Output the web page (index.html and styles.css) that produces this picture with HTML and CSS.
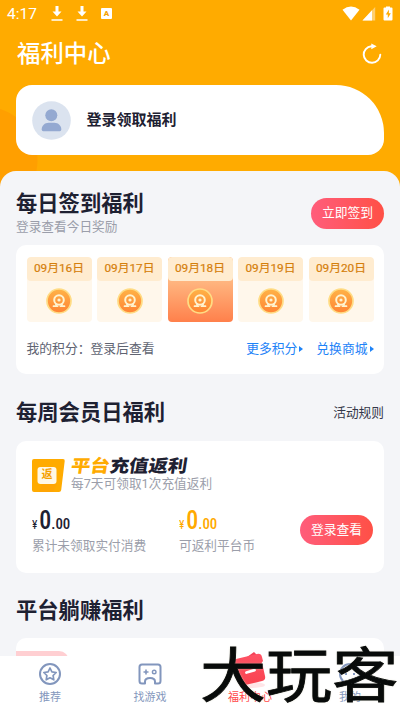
FILE: index.html
```html
<!DOCTYPE html>
<html lang="zh-CN">
<head>
<meta charset="utf-8">
<title>福利中心</title>
<link rel="stylesheet" href="styles.css">
</head>
<body>
<svg class="defs" width="0" height="0" aria-hidden="true">
  <defs>
    <linearGradient id="coinFill" x1="0" y1="0" x2="0" y2="1"><stop offset="0" stop-color="#ffb347"/><stop offset="1" stop-color="#ff8434"/></linearGradient>
    <linearGradient id="bagFill" x1="0" y1="0" x2="0" y2="1"><stop offset="0" stop-color="#ff5365"/><stop offset="1" stop-color="#f94350"/></linearGradient>
    <symbol id="coin" viewBox="0 0 26 26">
      <circle cx="13" cy="13" r="12" fill="url(#coinFill)" stroke="#ffdc85" stroke-width="1.7"/>
      <circle cx="13" cy="12" r="4.8" fill="none" stroke="#fff3cf" stroke-width="2"/>
      <circle cx="13" cy="12" r="1.6" fill="#fff3cf"/>
      <path d="M7.500 18.200h3.600l-1.200-2M18.500 18.200h-3.600l1.200-2" fill="none" stroke="#fff3cf" stroke-width="1.700" stroke-linecap="round"/>
    </symbol>
  </defs>
</svg>
<div class="screen">
  <header class="hero">
    <div class="status">
      <span class="clock">4:17</span>
      <svg class="dl" width="12" height="16" viewBox="0 0 12 16"><path d="M4.500 0h3v5.500h3L6 10.500 1.500 5.500h3zM.5 13.200h11v1.500H.5z" fill="#fff"/></svg>
      <svg class="dl second" width="12" height="16" viewBox="0 0 12 16"><path d="M4.500 0h3v5.500h3L6 10.500 1.500 5.500h3zM.5 13.200h11v1.500H.5z" fill="#fff"/></svg>
      <span class="abox">A</span>
      <svg class="signals" width="52" height="16" viewBox="0 0 52 16">
        <path d="M.5 3.800Q9 -2.800 17.500 3.800L9 14.500z" fill="#fff"/>
        <path d="M33.200 1v13.500H20.500z" fill="#ffcf70"/><path d="M30 4.300v10.200h-9.500z" fill="#fff"/>
        <path d="M44 1.500V.5h4v1h1.500q1 0 1 1v11q0 1-1 1h-7q-1 0-1-1v-11q0-1 1-1z" fill="#fff"/><path d="M47 3.500l-3.200 5h2v3.700l3-5h-2z" fill="#ffab00"/>
      </svg>
    </div>
    <div class="titlebar">
      <h1>福利中心</h1>
      <svg width="22" height="22" viewBox="0 0 22 22"><path d="M10.300 3.200A8.300 8.300 0 1 0 19.300 11.700" fill="none" stroke="#fff" stroke-width="1.900" stroke-linecap="round"/><path d="M10.300.4v5.800l5.400-2.900z" fill="#fff"/></svg>
    </div>
    <div class="login">
      <svg width="39" height="39" viewBox="0 0 39 39"><circle cx="19.500" cy="19.500" r="19.300" fill="#dbe3ef"/><circle cx="19.300" cy="14.200" r="6" fill="#94a9d1"/><path d="M9.700 28.500c0-4 3-6.800 7-6.800h5.600c4 0 7 2.800 7 6.800q0 1.700-1.600 1.700H11.300q-1.600 0-1.600-1.700z" fill="#94a9d1"/></svg>
      <span>登录领取福利</span>
    </div>
  </header>
  <main class="sheet">
    <div class="head daily">
      <div><h2>每日签到福利</h2><p class="muted">登录查看今日奖励</p></div>
      <span class="pill">立即签到</span>
    </div>
    <section class="card checkin">
      <div class="days">
        <div class="day"><span>09月16日</span><svg><use href="#coin"/></svg></div>
        <div class="day"><span>09月17日</span><svg><use href="#coin"/></svg></div>
        <div class="day today"><span>09月18日</span><svg><use href="#coin"/></svg></div>
        <div class="day"><span>09月19日</span><svg><use href="#coin"/></svg></div>
        <div class="day"><span>09月20日</span><svg><use href="#coin"/></svg></div>
      </div>
      <div class="points"><span class="mine">我的积分：登录后查看</span><a>更多积分</a><a>兑换商城</a></div>
    </section>
    <div class="head weekly"><h2>每周会员日福利</h2><span class="rules">活动规则</span></div>
    <section class="card rebate">
      <div class="promo">
        <div class="badge"><svg width="33" height="33" viewBox="0 0 33 33"><path d="M2 0h29q2 0 1.700 2l-3.500 29q-.3 2-2.200 2H2q-2 0-2-2V2q0-2 2-2z" fill="#ffab00"/><path d="M10 25h15l-4 8H7z" fill="#ff9f08" opacity=".5"/><rect x="5.500" y="8" width="19" height="17" rx="3" fill="#fff8e8"/></svg><b>返</b></div>
        <div><h3><em>平台</em>充值返利</h3><p class="muted">每7天可领取1次充值返利</p></div>
      </div>
      <div class="amounts">
        <div class="amount"><p class="money"><i>¥</i><b>0</b>.00</p><p class="muted">累计未领取实付消费</p></div>
        <div class="amount gold"><p class="money"><i>¥</i><b>0</b>.00</p><p class="muted">可返利平台币</p></div>
        <span class="pill">登录查看</span>
      </div>
    </section>
    <div class="head passive"><h2>平台躺赚福利</h2></div>
    <section class="card last"><div class="ribbon"></div></section>
  </main>
  <nav class="tabs">
    <div class="tab"><svg width="24" height="24" viewBox="0 0 24 24" fill="none" stroke="#8296bd" stroke-linejoin="round"><circle cx="12" cy="12" r="10" stroke-width="2"/><path d="M12 6l1.900 3.900 4.300.6-3.100 3 .7 4.300-3.800-2-3.800 2 .7-4.300-3.100-3 4.300-.6z" stroke-width="1.700"/></svg><span>推荐</span></div>
    <div class="tab"><svg width="24" height="24" viewBox="0 0 24 24" fill="none" stroke="#8296bd" stroke-width="2"><path d="M4 2.500h16q2.500 0 2.500 2.500v14q0 2.500-2.500 2.500h-3v-2q0-3.500-5-3.500t-5 3.500v2H4Q1.500 21.500 1.500 19V5Q1.500 2.500 4 2.500z" stroke-linejoin="round"/><path d="M5.500 10h5M8 7.500v5" stroke-width="1.600"/><circle cx="16.200" cy="10" r="1.800" stroke-width="1.400"/></svg><span>找游戏</span></div>
    <div class="tab active"><svg width="38" height="40" viewBox="0 0 38 40"><ellipse cx="21" cy="35" rx="13" ry="3" fill="#ffe5e7"/><path d="M16 7l7-5 6 6 1 4H15z" fill="#f34258"/><path d="M5 9q-3 1-2 4l1 5q4 1 3 5l2 9q1 4 5 3l17-4q4-1 3-5l-2-9q-3-3 0-6l-1-4q-1-4-5-3z" fill="url(#bagFill)"/><path d="M15.500 22.500l8-2.400" stroke="#fff" stroke-width="2.800" stroke-linecap="round"/></svg><span>福利中心</span></div>
    <div class="tab"><svg width="24" height="24" viewBox="0 0 24 24" fill="none" stroke="#8296bd"><circle cx="12" cy="12" r="10" stroke-width="2"/><path d="M8 11v2m8-2v2" stroke-width="2"/></svg><span>我的</span></div>
  </nav>
  <div class="watermark">大玩客</div>
</div>
</body>
</html>
```
FILE: styles.css
```css
* { box-sizing: border-box; margin: 0; padding: 0; }
body { width: 400px; height: 710px; overflow: hidden; font-family: Roboto, "Noto Sans CJK SC", sans-serif; color: #1e2132; }
.defs { position: absolute; }
.screen { position: relative; height: 710px; overflow: hidden; background: #ffab00; }
h1, h2, h3, p, span, a { white-space: nowrap; }
.hero { height: 190px; padding: 0 16px; background: radial-gradient(circle at -16px 160px, #ff9f00 53px, transparent 54px), #ffab00; }
.status { display: flex; height: 28px; padding-top: 6px; margin: 0 -9px; color: #fff; align-items: flex-start; }
.clock { font-size: 15.500px; line-height: 17px; width: 44px; }
.dl.second { margin-left: 13px; }
.abox { width: 11px; height: 11px; margin: 2px 0 0 13px; border-radius: 1px; background: #fff; color: #f5a000; font: 900 8px/11px Roboto, sans-serif; text-align: center; }
.signals { margin-left: auto; margin-right: -1px; }
.titlebar { display: flex; justify-content: space-between; align-items: center; height: 50px; color: #fff; }
.titlebar h1 { font-size: 23.400px; font-weight: 500; line-height: 34px; padding: 2px 0 0 1px; }
.titlebar svg { margin: 2px 1px 0 0; }
.login { display: flex; align-items: center; height: 70px; margin-top: 7px; padding-left: 15.500px; gap: 16px; border-radius: 16px 48px 16px 16px; background: #fff; font-size: 15px; font-weight: 700; }
.login span { margin-top: -3px; }
.sheet { position: relative; height: 538px; margin-top: -19px; padding: 0 16px; border-radius: 16px 16px 0 0; background: #f4f5f8; }
.head { display: flex; justify-content: space-between; }
h2 { font-size: 21.300px; line-height: 30px; font-weight: 700; }
.muted { font-size: 12.700px; line-height: 18px; color: #9b9eaa; }
.daily { height: 74px; padding-top: 18px; }
.daily .muted { line-height: 15px; }
.pill { width: 73px; height: 30px; border-radius: 16px; background: linear-gradient(90deg, #ff5d7b, #ff5046); color: #fff; font-size: 12.800px; line-height: 29px; text-align: center; }
.daily .pill { margin-top: 9px; height: 31px; }
.card { border-radius: 10px; background: #fff; }
.checkin { height: 129px; padding: 12px 10.500px 0; }
.days { display: grid; grid-template-columns: repeat(5, 65px); justify-content: space-between; }
.day { display: flex; flex-direction: column; align-items: center; height: 65px; border-radius: 4px; background: #fff7eb; overflow: hidden; }
.day span { width: 65px; height: 24px; border-radius: 4px; background: #ffecd0; color: #d57f0c; font-size: 11.800px; line-height: 23px; text-align: center; -webkit-text-stroke: .2px #d57f0c; }
.day svg { width: 26px; height: 26px; margin-top: 7px; }
.today { background: linear-gradient(180deg, #ffc08a 25%, #ff804b); }
.points { display: flex; margin-top: 17px; font-size: 12.800px; line-height: 20px; color: #606472; }
.mine { margin-right: auto; }
.points a { display: flex; align-items: center; margin-left: 13px; color: #1e83f7; }
.points a::after { content: ""; margin-left: 2px; border: 3px solid transparent; border-left: 4px solid #1e83f7; border-right: 0; }
.weekly { height: 66.500px; padding-top: 24px; }
.rules { margin-top: 6px; font-size: 12.700px; line-height: 18px; color: #353849; }
.rebate { height: 132px; padding: 18px 11px 0 16px; }
.promo { display: flex; height: 48px; gap: 6px; }
.badge { position: relative; width: 33px; height: 33px; }
.badge b { position: absolute; left: 5.500px; top: 8px; width: 19px; font-size: 11px; line-height: 16px; text-align: center; color: #f5a000; }
h3 { height: 16px; font-size: 17.300px; font-weight: 900; line-height: 15px; transform: skewX(-9deg) scaleX(1.120); transform-origin: 0 50%; }
h3 em { font-style: normal; color: #ffab00; }
.amounts { display: flex; position: relative; }
.amount { width: 147px; }
.money { height: 30px; font-size: 15.500px; line-height: 28px; font-family: "Roboto Condensed", Roboto, sans-serif; font-weight: 500; transform: scaleX(.960); transform-origin: 0 50%; }
.money i { font-style: normal; font-size: 12px; font-weight: 400; margin-right: 2px; }
.money b { font-size: 25px; font-weight: 500; }
.gold .money { color: #ffa900; }
.amounts .pill { margin: 8.500px 0 0 auto; flex: none; }
.gold { width: 100px; }
.passive { height: 65.500px; padding-top: 23px; }
.last { height: 80px; padding-top: 13px; }
.ribbon { width: 53px; height: 22px; border-radius: 0 10px 0 0; background: #ffcfd2; }
.tabs { position: absolute; left: 0; right: 0; bottom: 0; display: grid; grid-template-columns: repeat(4, 1fr); height: 54.500px; background: #fff; }
.tab { display: flex; flex-direction: column; align-items: center; justify-content: flex-end; padding-bottom: 4px; gap: 4px; color: #8497bc; font-size: 11px; line-height: 16px; height: 54.500px; }
.tab svg { flex: none; }
.active { gap: 0; color: #ff4848; }
.watermark { position: absolute; left: 200px; top: 639px; font-family: "Noto Sans CJK SC", sans-serif; font-size: 59px; line-height: 66px; font-weight: 400; color: #080b0a; white-space: nowrap; transform: scaleX(1.120); transform-origin: 0 50%; -webkit-text-stroke: .8px #080b0a; text-shadow: 0 0 2px #d8d4bf; }
```
